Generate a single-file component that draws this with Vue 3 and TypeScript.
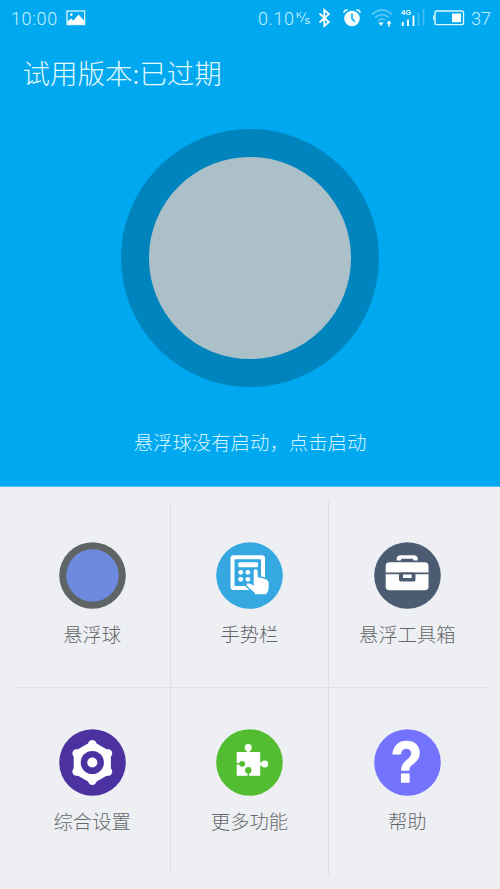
<script setup lang="ts">
interface MenuItem {
  id: string
  label: string
  color: string
}

const items: MenuItem[] = [
  { id: 'ball', label: '悬浮球', color: '#5f6564' },
  { id: 'gesture', label: '手势栏', color: '#35a8e2' },
  { id: 'toolbox', label: '悬浮工具箱', color: '#4b5c72' },
  { id: 'settings', label: '综合设置', color: '#4b32a0' },
  { id: 'more', label: '更多功能', color: '#53bd31' },
  { id: 'help', label: '帮助', color: '#7373fd' },
]

const gearAngles: number[] = [0, 60, 120, 180, 240, 300]
</script>

<template>
  <div class="screen">
    <section class="hero">
      <header class="status">
        <span class="clock">10:00</span>
        <svg class="picture" width="20" height="16" viewBox="0 0 20 16">
          <rect x="1" y="1" width="17.6" height="13.6" fill="none" stroke="#e4faff" stroke-width="1.2" />
          <circle cx="5.3" cy="4.6" r="1.3" fill="#fff" />
          <path d="M1.5 14V11.5L5 8.5l2.5 2 5-6 6 6.500V14z" fill="#fff" />
        </svg>
        <span class="speed">0.10</span>
        <svg class="unit" width="16" height="20" viewBox="0 0 16 20">
          <text x="0" y="9.500" class="tiny">K</text>
          <path d="M4.800 14.500L9.800 4.500" stroke="#d3f5ff" stroke-width="1" />
          <text x="8.500" y="15.500" class="tiny s">s</text>
        </svg>
        <svg class="bt" width="14" height="20" viewBox="0 0 14 20">
          <path d="M1.500 5.500L11 14 6.300 18V2L11 6 1.500 14.500" fill="none" stroke="#fff" stroke-width="1.800" />
        </svg>
        <svg class="alarm" width="20" height="20" viewBox="0 0 20 20">
          <circle cx="10" cy="10.500" r="7.800" fill="#f4fdff" />
          <path d="M1.800 4.800Q2.300 2 5.500 1.800M18.200 4.800Q17.700 2 14.500 1.800" fill="none" stroke="#e4faff" stroke-width="1.500" />
          <path d="M10 5.500v5.300l2.800 3" fill="none" stroke="#00a8f0" stroke-width="1.500" />
        </svg>
        <svg class="wifi" width="22" height="20" viewBox="0 0 22 20">
          <g fill="none" stroke="#55c6f6" stroke-width="1.800">
            <path d="M1 6.500Q11-2.500 21 6.500" />
            <path d="M4 9.700Q11 3.200 18 9.700" />
            <path d="M7 12.800Q11 9.200 14.500 12.400" />
          </g>
          <path d="M7.500 14.500h5L10 18z" fill="#fff" />
          <path d="M18 12.500l-2.500 3h1.700v3h1.600v-3h1.700z" fill="#fff" />
        </svg>
        <svg class="signal" width="25" height="20" viewBox="0 0 25 20">
          <text x="0" y="7.200" class="net">4G</text>
          <path d="M1.800 14v4M7 11.500V18M12.500 7.500V18" stroke="#f4fdff" stroke-width="1.900" />
          <path d="M17.500 4.500V18M22.500 1V18" stroke="#42c0f5" stroke-width="1.700" />
        </svg>
        <svg class="battery" width="32" height="18" viewBox="0 0 32 18">
          <rect x="2" y="2" width="28.500" height="13.600" rx="1.800" fill="none" stroke="#dff8ff" stroke-width="1.400" />
          <path d="M.8 6.500v4.500" stroke="#dff8ff" stroke-width="1.300" />
          <rect x="19" y="4.500" width="9" height="8.700" fill="#fff" />
        </svg>
        <span class="level">37</span>
      </header>
      <h1 class="title">试用版本:已过期</h1>
      <button class="power" type="button" aria-label="启动"></button>
      <p class="hint">悬浮球没有启动，点击启动</p>
    </section>

    <main class="grid">
      <div v-for="item in items" :key="item.id" class="cell">
        <svg class="icon" viewBox="0 0 67 67">
          <circle cx="33.500" cy="33.500" r="33.300" :fill="item.color" />
          <circle v-if="item.id === 'ball'" cx="33.500" cy="33.500" r="26.200" fill="#6e8ade" />
          <g v-else-if="item.id === 'gesture'" fill="#fff">
            <rect x="16.500" y="15.200" width="30.500" height="30.800" rx="1" fill="none" stroke="#fff" stroke-width="4" />
            <rect x="22.300" y="20.300" width="19.800" height="5" rx="1.500" />
            <circle cx="24.700" cy="30.300" r="2.400" />
            <circle cx="31.900" cy="30.300" r="2.400" />
            <circle cx="24.700" cy="37.300" r="2.400" />
            <circle cx="31.900" cy="37.300" r="2.400" />
            <path
              d="M37.700 29.500q0-2.300 2-2.300t2 2.300V35.500q2-.8 3.300.5 2-.5 3.200 1 2.200-.4 3 1.300 1.400.4 1.400 2.700v5.500q-.4 3.500-2.600 5.800h-10.500q-1.800-2.700-4.500-4.800L30.500 43.500q-.4-1.800 1.400-2.200 2.800.1 5.800 2.400z"
              stroke="#35a8e2" stroke-width="2.600" paint-order="stroke"
            />
          </g>
          <g v-else-if="item.id === 'toolbox'" fill="#fff">
            <path d="M22.700 18.600v-2.300q.6-3.100 4-3.100h13q3.400 0 4 3.100v2.300h-4l-.8-1.800H27.500l-.8 1.800z" />
            <rect x="11.700" y="20.200" width="42.800" height="28" rx="3.800" />
            <path d="M11.500 31.300h43.200" :stroke="item.color" stroke-width="1.800" />
            <rect x="25" y="30.400" width="16.500" height="9.200" rx="2" :fill="item.color" />
            <rect x="29" y="32.500" width="8.700" height="3.500" rx=".5" />
          </g>
          <g v-else-if="item.id === 'settings'" fill="#fff">
            <g transform="translate(33.300 33.500)">
              <path d="M0-21.500L18.600-10.700V10.700L0 21.500-18.600 10.700V-10.700z" />
              <circle v-for="a in gearAngles" :key="a" cy="-18.200" r="4.200" :transform="`rotate(${a})`" />
              <circle r="11.600" :fill="item.color" />
              <circle r="5.100" />
            </g>
          </g>
          <g v-else-if="item.id === 'more'" fill="#fff">
            <rect x="20.700" y="23" width="23.500" height="23.800" />
            <path d="M30.800 18h2.800v6h-2.800zM43.500 33.500h5v2.900h-5z" />
            <circle cx="32.200" cy="18.600" r="3.500" />
            <circle cx="48.700" cy="35" r="3.500" />
            <g :fill="item.color">
              <circle cx="26.200" cy="34.800" r="2.900" />
              <circle cx="32.300" cy="41.200" r="3.200" />
              <path d="M20.500 34.100h4v1.400h-4zM31.500 42h1.600v5h-1.600z" />
            </g>
          </g>
          <text v-else x="0" y="0" class="question" transform="translate(32.400 53.200) scale(.88 1)">?</text>
        </svg>
        <span class="label">{{ item.label }}</span>
      </div>
    </main>
  </div>
</template>

<style>
body {
  margin: 0;
}
</style>

<style scoped>
.screen {
  display: flex;
  flex-direction: column;
  width: 500px;
  height: 889px;
  overflow: hidden;
  background: #edeff3;
  font-family: 'Noto Sans CJK SC', sans-serif;
  font-weight: 300;
}

.hero {
  display: flex;
  flex-direction: column;
  align-items: center;
  box-sizing: border-box;
  height: 487px;
  background: #00a8f0;
  border-bottom: 1px solid #48bdf0;
}

.status {
  display: flex;
  align-items: center;
  box-sizing: border-box;
  width: 100%;
  height: 36px;
  padding: 0 8px 0 11px;
  color: #c5f0ff;
  font: 300 18px/36px Roboto, sans-serif;
  white-space: nowrap;
}

.status span {
  flex: none;
  padding-top: 1px;
}

.status svg {
  flex: none;
}

.clock {
  width: 55px;
  letter-spacing: 0.6px;
}

.speed {
  width: 38px;
  margin-left: 172px;
  letter-spacing: 0.6px;
}

.unit {
  margin-right: 6px;
}

.bt {
  margin-right: 10px;
}

.alarm {
  margin-right: 9px;
}

.wifi {
  margin-right: 8px;
}

.signal {
  margin-right: 7px;
}

.battery {
  margin-right: 6px;
}

.tiny {
  fill: #d3f5ff;
  font: 400 9px 'Liberation Sans', sans-serif;
}

.s {
  font-size: 11px;
}

.net {
  fill: #e8fbff;
  font: 700 7.5px 'Liberation Sans', sans-serif;
}

.title {
  align-self: flex-start;
  height: 40px;
  margin: 16px 0 0 22.5px;
  color: #e2f9ff;
  font-size: 27.5px;
  font-weight: 300;
  line-height: 40px;
}

.power {
  box-sizing: border-box;
  flex: none;
  width: 258px;
  height: 258px;
  margin: 37px 0 0;
  padding: 0;
  border: 28px solid #0084bd;
  border-radius: 50%;
  background: #abc0c8;
}

.hint {
  height: 30px;
  margin: 40px 0 0;
  color: #d4f5ff;
  font-size: 19.4px;
  line-height: 30px;
}

.grid {
  display: grid;
  grid-template-columns: repeat(3, 1fr);
  grid-template-rows: 187px 187px;
  margin: 14px 14px 0;
}

.cell {
  display: flex;
  flex-direction: column;
  align-items: center;
  box-sizing: border-box;
  padding-top: 40.5px;
  border-right: 1px solid #dddfe2;
  border-bottom: 1px solid #dddfe2;
}

.cell:nth-child(3n) {
  border-right: 0;
}

.cell:nth-child(n + 4) {
  padding-top: 41px;
  border-bottom: 0;
}

.icon {
  flex: none;
  width: 67px;
  height: 67px;
}

.label {
  margin-top: 10.5px;
  color: #666769;
  font-size: 19.3px;
  line-height: 30px;
}

.cell:nth-child(n + 4) .label {
  margin-top: 10px;
}

.question {
  fill: #fff;
  stroke: #fff;
  stroke-width: 1.6;
  font: 700 58px 'Liberation Sans', sans-serif;
  text-anchor: middle;
}
</style>
